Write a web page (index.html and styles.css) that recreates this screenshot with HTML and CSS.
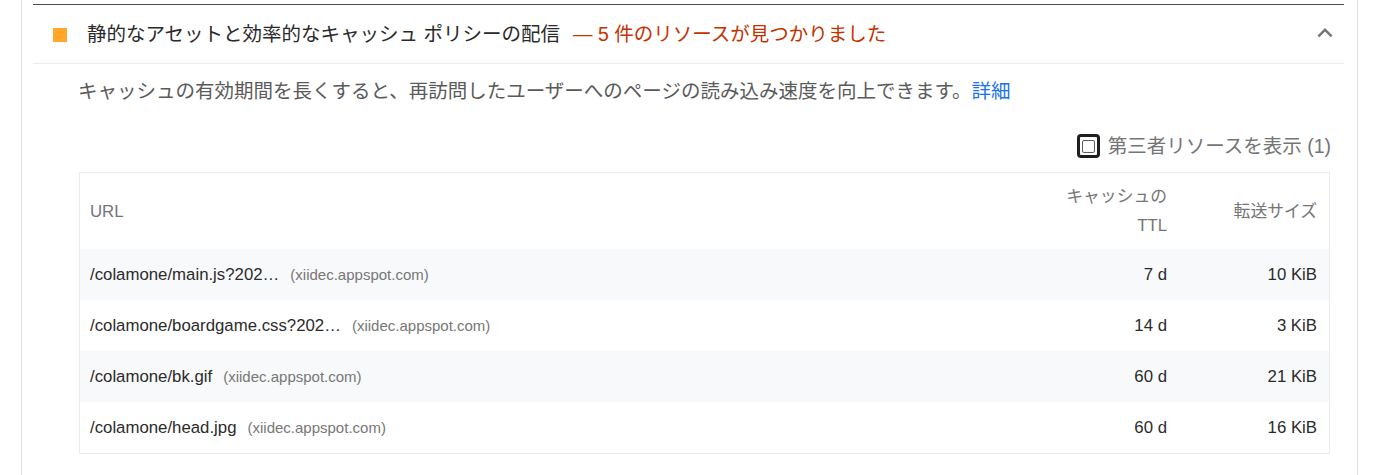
FILE: index.html
```html
<!DOCTYPE html>
<html lang="ja">
<head>
<meta charset="utf-8">
<title>静的なアセットと効率的なキャッシュ ポリシーの配信</title>
<link rel="stylesheet" href="styles.css">
</head>
<body>
<div class="panel">
  <div class="audit">
    <div class="audit-header">
      <span class="audit-icon"></span>
      <span class="audit-title">静的なアセットと効率的なキャッシュ ポリシーの配信</span>
      <span class="audit-display">— 5 件のリソースが見つかりました</span>
      <svg class="chevron" viewBox="0 0 24 24" width="30" height="30"><path d="M7.41 15.41L12 10.83l4.59 4.58L18 14l-6-6-6 6z" fill="#757575"/></svg>
    </div>
    <div class="audit-body">
      <p class="description">キャッシュの有効期間を長くすると、再訪問したユーザーへのページの読み込み速度を向上できます。<a class="link" href="#">詳細</a></p>
      <div class="filter">
        <span class="checkbox"><span class="checkbox-inner"></span></span>
        <span class="filter-label">第三者リソースを表示 (1)</span>
      </div>
      <table class="details">
        <thead>
          <tr>
            <th class="col-url">URL</th>
            <th class="col-ttl">キャッシュの TTL</th>
            <th class="col-size">転送サイズ</th>
          </tr>
        </thead>
        <tbody>
          <tr>
            <td class="col-url"><span class="url-main">/colamone/main.js?202…</span><span class="url-host">(xiidec.appspot.com)</span></td>
            <td class="col-ttl">7 d</td>
            <td class="col-size">10 KiB</td>
          </tr>
          <tr>
            <td class="col-url"><span class="url-main">/colamone/boardgame.css?202…</span><span class="url-host">(xiidec.appspot.com)</span></td>
            <td class="col-ttl">14 d</td>
            <td class="col-size">3 KiB</td>
          </tr>
          <tr>
            <td class="col-url"><span class="url-main">/colamone/bk.gif</span><span class="url-host">(xiidec.appspot.com)</span></td>
            <td class="col-ttl">60 d</td>
            <td class="col-size">21 KiB</td>
          </tr>
          <tr>
            <td class="col-url"><span class="url-main">/colamone/head.jpg</span><span class="url-host">(xiidec.appspot.com)</span></td>
            <td class="col-ttl">60 d</td>
            <td class="col-size">16 KiB</td>
          </tr>
        </tbody>
      </table>
    </div>
  </div>
</div>
</body>
</html>
```
FILE: styles.css
```css
* { box-sizing: border-box; }

html, body {
  margin: 0;
  padding: 0;
  background: #ffffff;
}

body {
  font-family: "Liberation Sans", "Noto Sans CJK JP", sans-serif;
  color: #212121;
}

.panel {
  margin-left: 21px;
  width: 1337px;
  min-height: 475px;
  border-left: 1px solid #e2e2e2;
  border-right: 1px solid #e2e2e2;
  padding: 4px 13px 0 11px;
}

.audit {
  border-top: 1px solid #4d4d4d;
}

.audit-header {
  display: flex;
  align-items: center;
  height: 59px;
  padding-left: 20px;
  padding-right: 4px;
  border-bottom: 1px solid #ebebeb;
}

.audit-icon {
  width: 14px;
  height: 14px;
  background: #ffa62b;
  flex: none;
  margin-top: 1px;
}

.audit-title {
  margin-left: 20px;
  font-size: 19.5px;
  color: #2a2a2a;
  line-height: 28px;
}

.audit-display {
  margin-left: 13px;
  font-size: 19.5px;
  line-height: 28px;
  color: #c33300;
}

.chevron {
  margin-left: auto;
  margin-top: -2px;
  flex: none;
}

.audit-body {
  padding-left: 45px;
  padding-right: 13px;
}

.description {
  margin: 0;
  padding-top: 13px;
  font-size: 19.5px;
  line-height: 28px;
  color: #5a5a5a;
}

.link {
  color: #1a73e8;
  text-decoration: none;
}

.filter {
  margin-top: 29px;
  display: flex;
  justify-content: flex-end;
  align-items: center;
  height: 24px;
}

.checkbox {
  width: 23px;
  height: 24px;
  border: 3px solid #1f1f1f;
  border-radius: 4px;
  display: flex;
  align-items: center;
  justify-content: center;
  flex: none;
}

.checkbox-inner {
  width: 13px;
  height: 13px;
  border: 1.5px solid #5f5f5f;
  border-radius: 2px;
  background: #fff;
}

.filter-label {
  margin-left: 8px;
  font-size: 19.5px;
  line-height: 24px;
  color: #757575;
}

.details {
  margin-top: 14px;
  margin-left: 1px;
  width: 1251px;
  border: 1px solid #ebebeb;
  border-spacing: 0;
  font-size: 16.8px;
}

.details th {
  font-weight: normal;
  color: #757575;
  line-height: 29px;
  padding: 9px 12px 9px 10px;
  vertical-align: middle;
}

.details th.col-url { text-align: left; }

.details th.col-ttl {
  width: 134px;
  text-align: right;
}

.details th.col-size {
  width: 150px;
  text-align: right;
}

.details td {
  height: 51px;
  padding: 0 12px 0 10px;
  line-height: 21px;
  vertical-align: middle;
  color: #2b2b2b;
}

.details td.col-ttl,
.details td.col-size {
  text-align: right;
}

.details tbody tr:nth-child(odd) td {
  background: #f8f9fa;
}

.url-main {
  color: #2b2b2b;
}

.url-host {
  margin-left: 11px;
  font-size: 15px;
  color: #777777;
}
```
